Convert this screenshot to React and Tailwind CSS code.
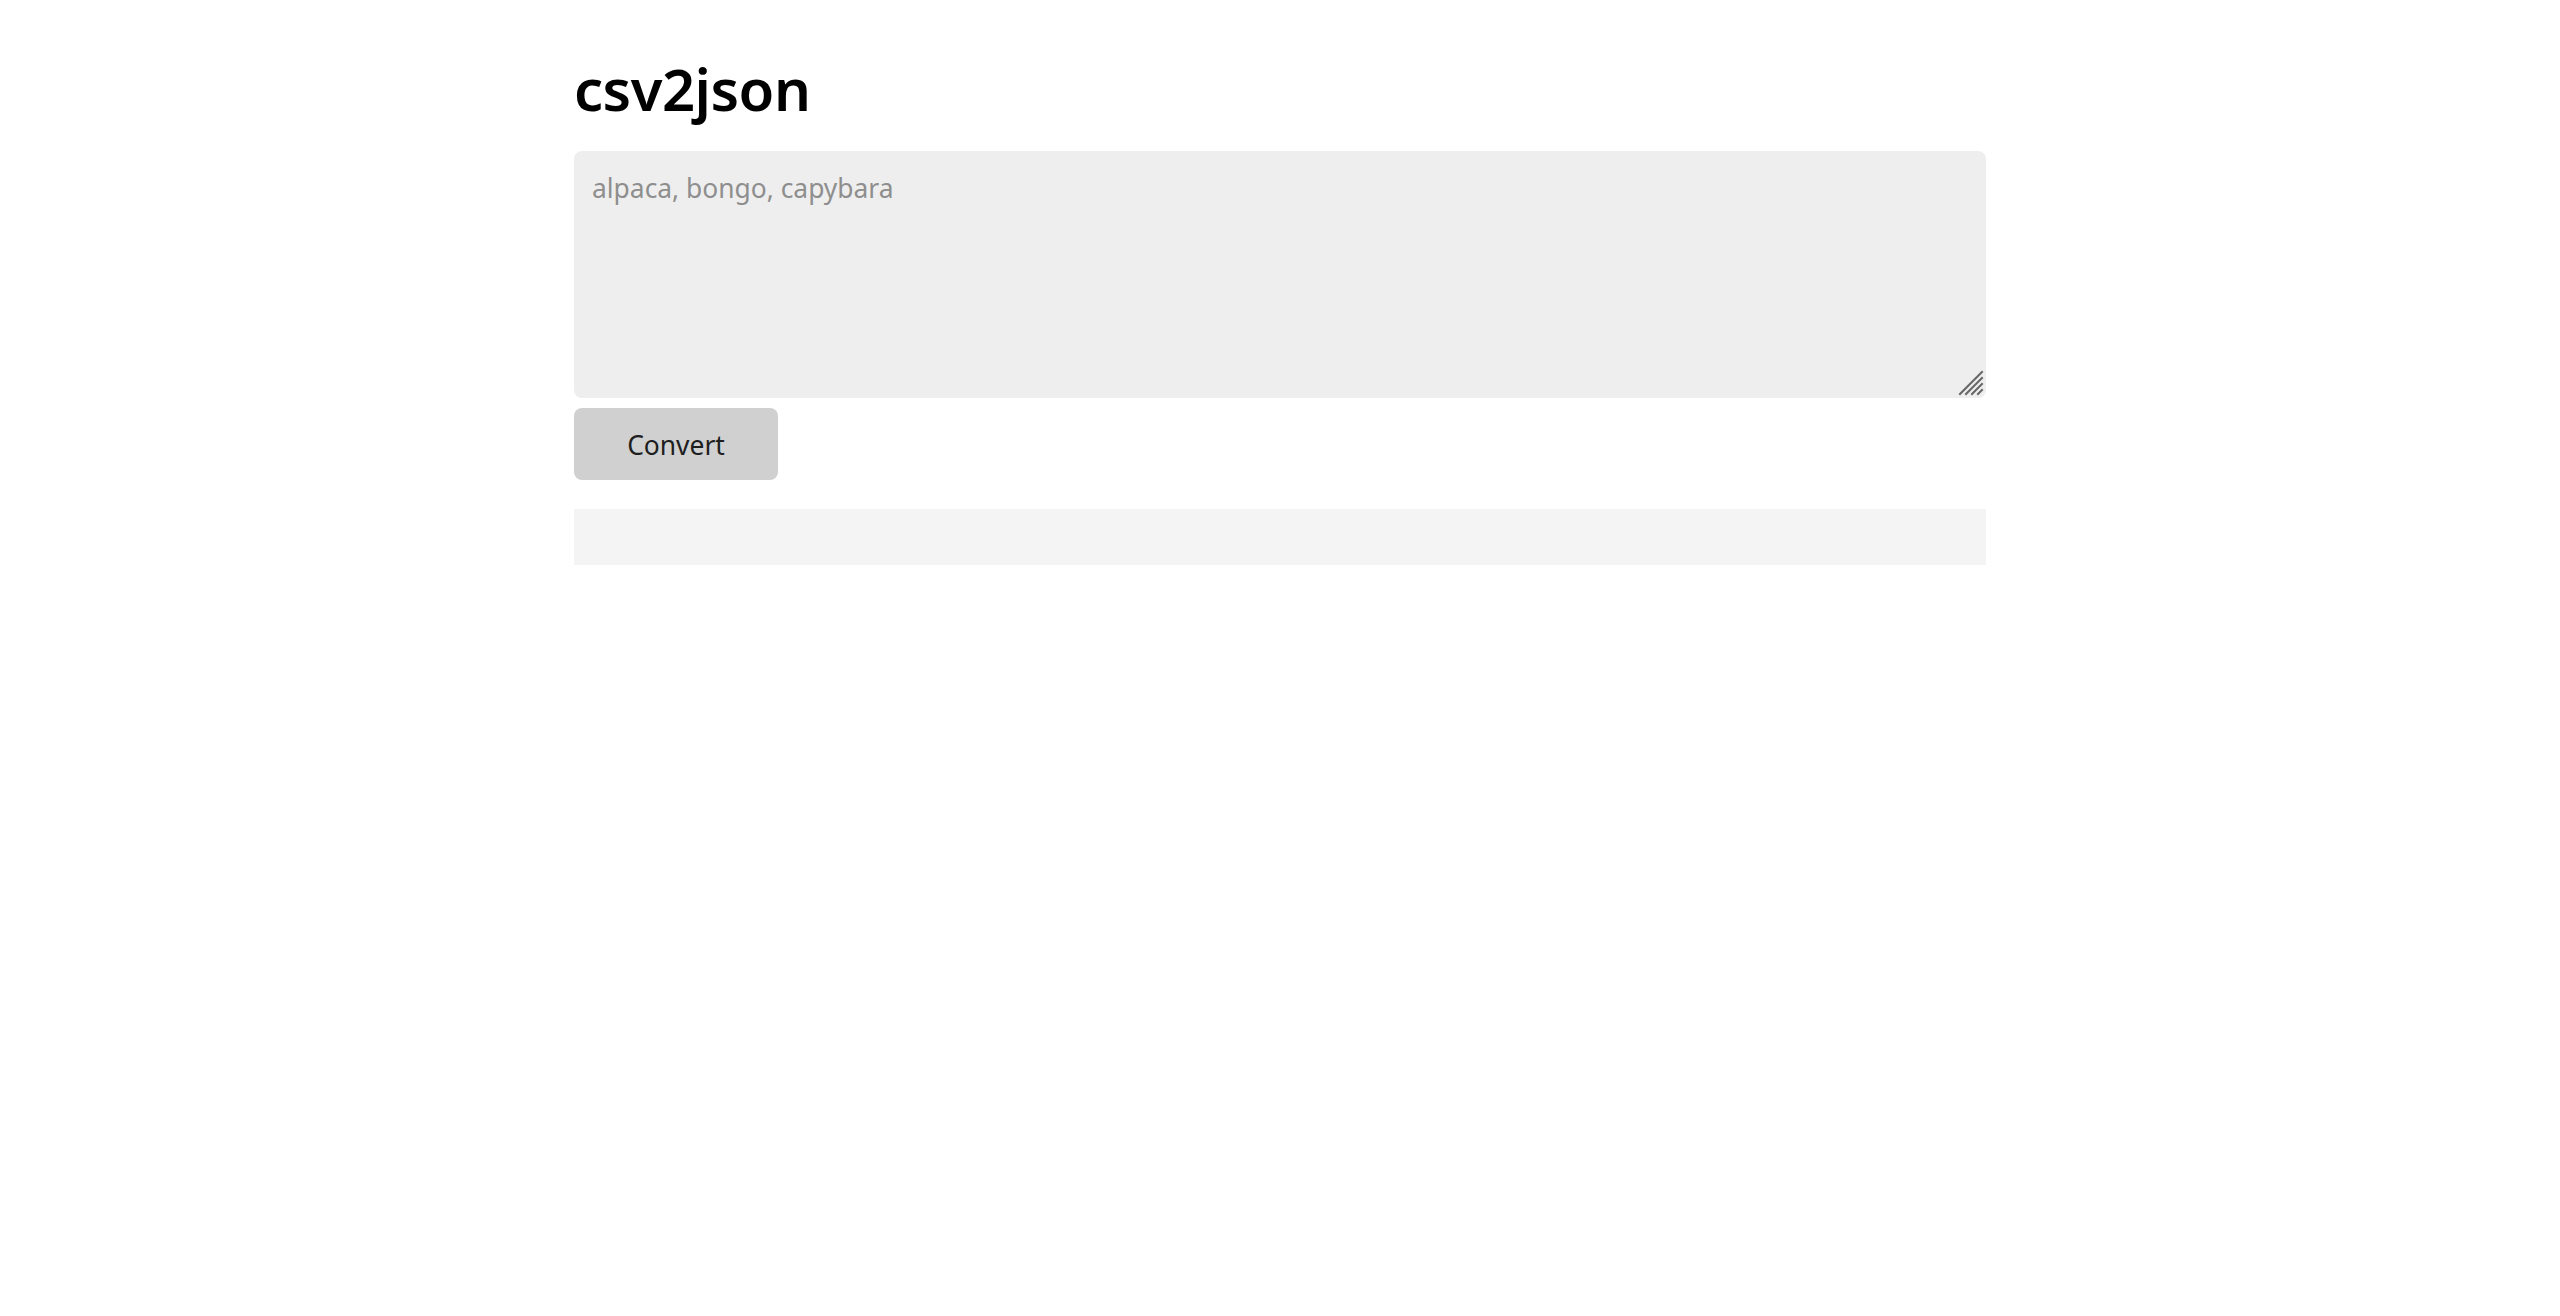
import React, { useState } from 'react';

const ResizeGrip = () => (
  <svg
    className="pointer-events-none absolute bottom-[2px] right-[2px]"
    width="26"
    height="26"
    viewBox="0 0 26 26"
  >
    <g stroke="#666" strokeWidth="2" strokeLinecap="square">
      <line x1="2" y1="24" x2="24" y2="2" />
      <line x1="8" y1="24" x2="24" y2="8" />
      <line x1="14" y1="24" x2="24" y2="14" />
      <line x1="20" y1="24" x2="24" y2="20" />
    </g>
  </svg>
);

const App = () => {
  const [csv, setCsv] = useState('');
  const [json, setJson] = useState('');

  const convert = () => {
    const rows = csv.split('\n').map((r) => r.split(',').map((c) => c.trim()));
    setJson(rows[0] && rows[0][0] ? JSON.stringify(rows) : '');
  };

  return (
    <div className="min-h-screen bg-white text-black font-['Noto_Sans','Open_Sans',sans-serif]">
      <div className="mx-auto w-[1412px] pt-[53px]">
        <h1 className="text-[58px] font-semibold leading-[72px] tracking-[-0.5px]">csv2json</h1>
        <div className="relative mt-[26px]">
          <textarea
            value={csv}
            onChange={(e) => setCsv(e.target.value)}
            placeholder="alpaca, bongo, capybara"
            className="block h-[247px] w-full resize-none rounded-lg bg-[#eeeeee] px-[18px] py-[18px] text-[26.4px] leading-[38px] text-[#222] outline-none placeholder:text-[#8e8e8e]"
          />
          <ResizeGrip />
        </div>
        <button
          onClick={convert}
          className="mt-[10px] h-[72px] w-[204px] rounded-lg bg-[#d0d0d0] pt-[4px] text-[26.4px] text-[#1e1e1e]"
        >
          Convert
        </button>
        <pre className="mt-[29px] min-h-[56px] bg-[#f4f4f4] px-[18px] text-[22px]">{json}</pre>
      </div>
    </div>
  );
};

export default App;
